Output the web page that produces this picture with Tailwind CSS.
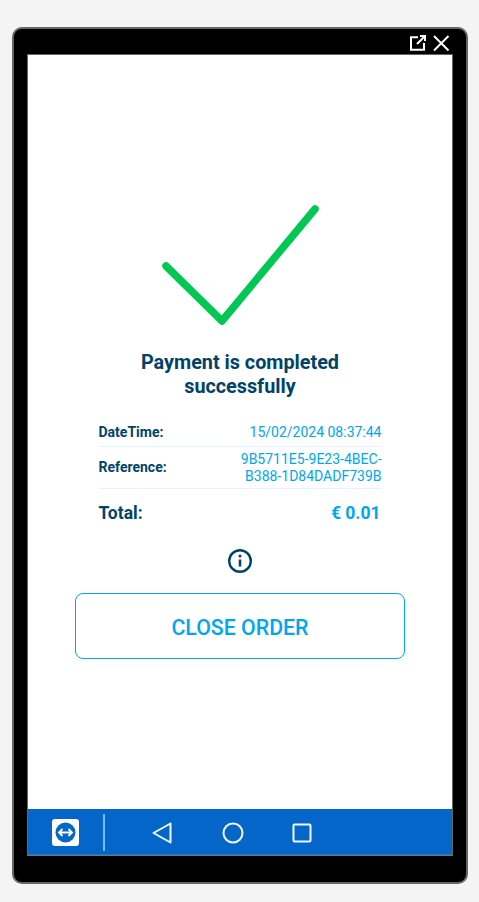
<!DOCTYPE html>
<html lang="en">
<head>
  <meta charset="UTF-8" />
  <meta name="viewport" content="width=device-width, initial-scale=1.0" />
  <title>Payment completed</title>
  <script src="https://cdn.jsdelivr.net/npm/@tailwindcss/browser@4"></script>
</head>
<body class="bg-[#f4f4f4] h-[902px] overflow-hidden pt-[27px] font-['Roboto',sans-serif]">
  <div class="mx-[12px] w-[456px] h-[857px] bg-black border-2 border-[#666] rounded-[10px] flex flex-col items-center">
    <!-- window actions -->
    <div class="w-full h-[25px] shrink-0 flex justify-end items-start gap-[5px] pt-[5px] pr-[16px]">
      <svg class="w-[18px] h-[18px]" viewBox="0 0 18 18" fill="none" stroke="#fff" stroke-width="2">
        <path d="M9 3.3H2v12.4h13V9" />
        <path d="M8 10 16 2M11 2h5v5" />
      </svg>
      <svg class="w-[18px] h-[18px]" viewBox="0 0 18 18" fill="none" stroke="#fff" stroke-width="2">
        <path d="M2 2l14.5 14.5M16.5 2 2 16.5" />
      </svg>
    </div>

    <!-- screen -->
    <div class="w-[426px] h-[802px] shrink-0 border border-[#666] border-b-[#777] bg-white flex flex-col">
      <main class="flex-1 flex flex-col items-center">
        <svg class="mt-[150px] ml-[6px] w-[162px] h-[124px] shrink-0" viewBox="0 0 162 124" fill="none" stroke="#00c853" stroke-width="7.5" stroke-linecap="round" stroke-linejoin="round">
          <path d="M4 61 60 116 153 4" />
        </svg>

        <h1 class="mt-[22px] w-[240px] text-center text-[19.8px] leading-[24px] font-bold text-[#004368]">Payment is completed successfully</h1>

        <dl class="mt-[20px] w-[283px] text-[14px]">
          <div class="h-[28px] flex justify-between items-center border-b border-[#e4f4fc]">
            <dt class="font-bold text-[#004368]">DateTime:</dt>
            <dd class="text-[#00a7eb]">15/02/2024 08:37:44</dd>
          </div>
          <div class="h-[42px] flex justify-between items-center border-b border-[#e4f4fc]">
            <dt class="font-bold text-[#004368]">Reference:</dt>
            <dd class="w-[160px] text-right leading-[17px] text-[#00a7eb]">9B5711E5-9E23-4BEC-<br />B388-1D84DADF739B</dd>
          </div>
          <div class="h-[47px] pt-[2px] flex justify-between items-center text-[17.5px] font-bold">
            <dt class="text-[#004368]">Total:</dt>
            <dd class="text-[#00a7eb] pr-[1px]">€ 0.01</dd>
          </div>
        </dl>

        <svg class="mt-[12px] w-[26px] h-[26px] shrink-0" viewBox="0 0 26 26" fill="none" stroke="#004368">
          <circle cx="13" cy="13" r="10.8" stroke-width="2.4" />
          <path d="M13 11.5v7" stroke-width="2.6" />
          <circle cx="13" cy="8" r="1.5" fill="#004368" stroke="none" />
        </svg>

        <button class="mt-[19px] w-[330px] h-[66px] shrink-0 border border-[#00a7eb] rounded-[8px] pt-[3px] text-[21.3px] font-medium text-[#00a7eb] bg-white">CLOSE ORDER</button>
      </main>

      <!-- android nav bar -->
      <nav class="h-[46px] shrink-0 bg-[#0566c9] border-b border-[#0a78dc] flex items-center pl-[24px] pt-[2px]">
        <div class="w-[27px] h-[27px] bg-white rounded-[3px] flex items-center justify-center">
          <svg class="w-[23px] h-[23px]" viewBox="0 0 23 23">
            <circle cx="11.5" cy="11.5" r="10" fill="#0566c9" />
            <path d="M5 11.5h13M8.5 8 5 11.5 8.5 15M14.5 8 18 11.5 14.5 15" fill="none" stroke="#fff" stroke-width="1.8" />
          </svg>
        </div>
        <div class="ml-[24px] w-[2px] h-[37px] bg-[#7fb8ec]"></div>
        <svg class="ml-[47px] w-[20px] h-[22px]" viewBox="0 0 20 22" fill="none" stroke="#f2f7fc" stroke-width="2" stroke-linejoin="round">
          <path d="M18.5 1.5v19L1.5 11Z" />
        </svg>
        <svg class="ml-[50px] w-[22px] h-[22px]" viewBox="0 0 22 22" fill="none" stroke="#f2f7fc" stroke-width="2">
          <circle cx="11" cy="11" r="9.5" />
        </svg>
        <svg class="ml-[48px] w-[20px] h-[20px]" viewBox="0 0 20 20" fill="none" stroke="#f2f7fc" stroke-width="2" stroke-linejoin="round">
          <rect x="1.5" y="1.5" width="17" height="17" rx="1" />
        </svg>
      </nav>
    </div>
  </div>
</body>
</html>
